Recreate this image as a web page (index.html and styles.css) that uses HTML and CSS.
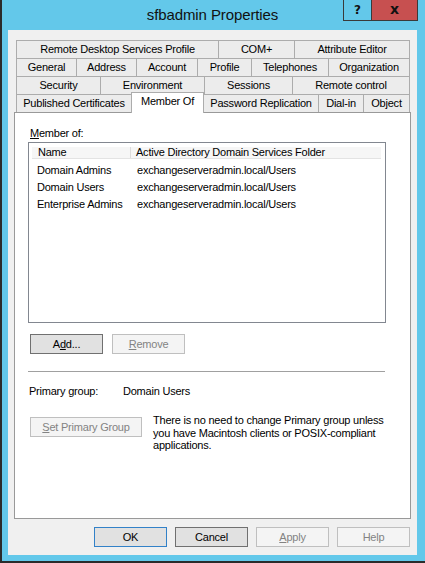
FILE: index.html
```html
<!DOCTYPE html>
<html>
<head>
<meta charset="utf-8">
<link rel="stylesheet" href="styles.css">
</head>
<body>
<div class="window">
  <div class="titlebar">
    <div class="title">sfbadmin Properties</div>
    <div class="caption-btns">
      <span class="cap help">?</span><span class="cap close">x</span>
    </div>
  </div>
  <div class="client">
    <div class="tabs">
      <div class="tab-row">
        <div class="tab w203">Remote Desktop Services Profile</div>
        <div class="tab w77">COM+</div>
        <div class="tab w116">Attribute Editor</div>
      </div>
      <div class="tab-row">
        <div class="tab w61">General</div>
        <div class="tab w61">Address</div>
        <div class="tab w62">Account</div>
        <div class="tab w55">Profile</div>
        <div class="tab w78">Telephones</div>
        <div class="tab w82">Organization</div>
      </div>
      <div class="tab-row">
        <div class="tab w85">Security</div>
        <div class="tab w105">Environment</div>
        <div class="tab w89">Sessions</div>
        <div class="tab w118">Remote control</div>
      </div>
      <div class="tab-row last">
        <div class="tab w116">Published Certificates</div>
        <div class="tab w73 selected">Member Of</div>
        <div class="tab w116">Password Replication</div>
        <div class="tab w46">Dial-in</div>
        <div class="tab w47">Object</div>
      </div>
    </div>
    <div class="panel">
      <div class="label-member"><u>M</u>ember of:</div>
      <div class="listbox">
        <div class="lv-header">
          <div class="hcell c1">Name</div>
          <div class="hcell c2">Active Directory Domain Services Folder</div>
        </div>
        <div class="lv-rows">
          <div class="lv-row"><span class="col1">Domain Admins</span><span class="col2">exchangeserveradmin.local/Users</span></div>
          <div class="lv-row"><span class="col1">Domain Users</span><span class="col2">exchangeserveradmin.local/Users</span></div>
          <div class="lv-row"><span class="col1">Enterprise Admins</span><span class="col2">exchangeserveradmin.local/Users</span></div>
        </div>
      </div>
      <div class="btn-row">
        <div class="btn dark">A<u>d</u>d...</div>
        <div class="btn disabled"><u>R</u>emove</div>
      </div>
      <div class="separator"></div>
      <div class="primary-row">
        <span class="pg-label">Primary group:</span>
        <span class="pg-value">Domain Users</span>
      </div>
      <div class="set-row">
        <div class="btn disabled wide"><u>S</u>et Primary Group</div>
        <div class="desc">There is no need to change Primary group unless<br>you have Macintosh clients or POSIX-compliant<br>applications.</div>
      </div>
    </div>
    <div class="dlg-buttons">
      <div class="btn default">OK</div>
      <div class="btn dark">Cancel</div>
      <div class="btn disabled"><u>A</u>pply</div>
      <div class="btn disabled">Help</div>
    </div>
  </div>
</div>
</body>
</html>
```
FILE: styles.css
```css
* { box-sizing: border-box; }
html, body { margin: 0; padding: 0; }
body {
  width: 425px;
  height: 563px;
  overflow: hidden;
  font-family: "Liberation Sans", Arial, sans-serif;
  font-size: 11px;
  letter-spacing: -0.22px;
  color: #000;
}
.window {
  width: 425px;
  height: 563px;
  background: #63c8ea;
  border-left: 2px solid #2b2b2b;
  border-bottom: 2px solid #2b2b2b;
  padding: 0 8px 6px 6px;
  display: flex;
  flex-direction: column;
}
.titlebar {
  position: relative;
  height: 30px;
  flex: none;
}
.title {
  margin-left: -8px;
  margin-right: -8px;
  text-align: center;
  font-size: 15px;
  letter-spacing: -0.1px;
  line-height: 17px;
  padding-top: 6px;
  color: #111;
}
.caption-btns {
  position: absolute;
  top: 0;
  right: -1px;
  display: flex;
}
.cap {
  height: 21px;
  border: 1px solid #3a3a3a;
  border-top: none;
  display: flex;
  align-items: center;
  justify-content: center;
  font-weight: bold;
  color: #111;
  font-family: "DejaVu Sans", sans-serif;
  letter-spacing: 0;
}
.help {
  width: 29px;
  font-size: 12px;
  background: #63c8ea;
}
.close {
  width: 47px;
  margin-left: -1px;
  font-size: 14px;
  background: #c75050;
  padding-bottom: 2px;
}
.client {
  flex: 1;
  background: #f0f0f0;
  padding-top: 10px;
  display: flex;
  flex-direction: column;
}
.tabs { margin-left: 8px; }
.tab-row {
  display: flex;
  height: 18px;
}
.tab-row.last { align-items: flex-end; }
.tab {
  height: 18px;
  border: 1px solid #acacac;
  border-bottom: none;
  background: #ececec;
  text-align: center;
  line-height: 17px;
  white-space: nowrap;
  margin-left: -1px;
  flex: none;
}
.tab:first-child { margin-left: 0; }
.tab.selected {
  height: 21px;
  margin-bottom: -1px;
  background: #fff;
  position: relative;
  z-index: 2;
}
.w203 { width: 203px; } .w77 { width: 77px; } .w116 { width: 116px; }
.w61 { width: 61px; } .w62 { width: 62px; } .w55 { width: 55px; }
.w78 { width: 78px; } .w82 { width: 82px; } .w85 { width: 85px; }
.w105 { width: 105px; } .w89 { width: 89px; } .w118 { width: 118px; }
.w73 { width: 73px; } .w46 { width: 46px; } .w47 { width: 47px; }

.panel {
  margin-left: 6px;
  width: 397px;
  height: 407px;
  background: #fff;
  border: 1px solid #999;
  padding: 14px 0 0 13px;
  flex: none;
}
.label-member {
  line-height: 13px;
  margin-left: 2px;
}
.listbox {
  margin-top: 2px;
  width: 358px;
  height: 181px;
  border: 1px solid #828790;
  padding: 4px 4px 0 3px;
}
.lv-header {
  display: flex;
  height: 12px;
  background: #f6f6f6;
  border-bottom: 1px solid #e3e3e3;
  line-height: 11px;
}
.hcell { white-space: nowrap; }
.hcell.c1 {
  width: 99px;
  padding-left: 6px;
  border-right: 1px solid #dcdcdc;
}
.hcell.c2 { padding-left: 5px; }
.lv-rows { margin-top: 3px; }
.lv-row {
  display: flex;
  line-height: 17px;
  height: 17px;
  padding-left: 5px;
  white-space: nowrap;
}
.col1 { width: 100px; }
.btn-row {
  display: flex;
  gap: 9px;
  margin-top: 11px;
  margin-left: 2px;
}
.btn {
  width: 73px;
  height: 20px;
  border: 1px solid #adadad;
  background: #e1e1e1;
  text-align: center;
  line-height: 18px;
  white-space: nowrap;
  flex: none;
}
.btn.dark { border-color: #707070; }
.btn.default { border-color: #3281c8; }
.btn.disabled {
  background: #f4f4f4;
  border-color: #bfbfbf;
  color: #838383;
}
.btn.wide { width: 112px; }
.separator {
  margin-top: 17px;
  width: 357px;
  height: 1px;
  background: #a0a0a0;
}
.primary-row {
  margin-top: 13px;
  margin-left: 1px;
  line-height: 13px;
  display: flex;
}
.pg-label { width: 94px; }
.set-row {
  display: flex;
  align-items: flex-start;
  margin-top: 19px;
  margin-left: 2px;
  gap: 11px;
}
.desc {
  margin-top: -3px;
  line-height: 12.5px;
  white-space: nowrap;
}
.dlg-buttons {
  display: flex;
  justify-content: flex-end;
  gap: 8px;
  margin-top: 8px;
  padding-right: 7px;
}
```
